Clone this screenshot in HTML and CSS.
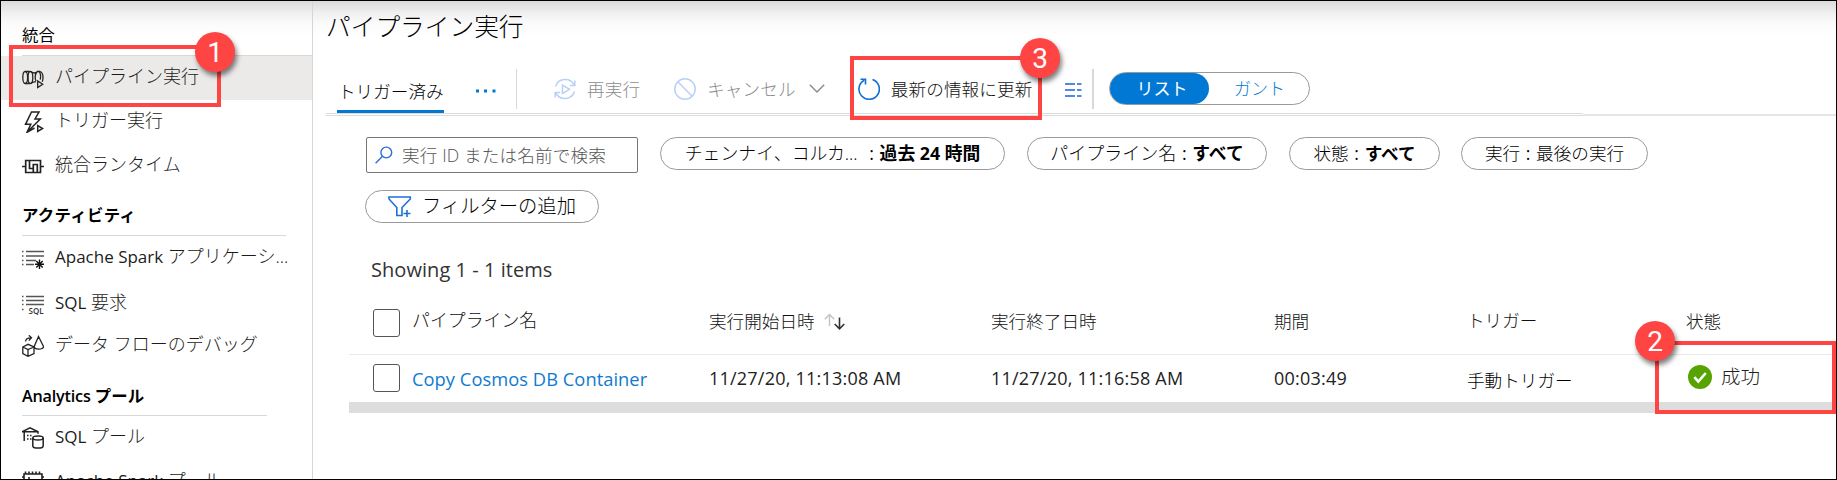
FILE: index.html
```html
<!DOCTYPE html>
<html lang="ja">
<head>
<meta charset="utf-8">
<title>パイプライン実行</title>
<link rel="stylesheet" href="styles.css">
</head>
<body>
<div class="frame">
  <nav class="sidebar">
    <h2 class="group group-first">統合</h2>
    <a class="item item-active">
      <svg class="icon" viewBox="0 0 22 22"><g fill="none" stroke="#222" stroke-width="1.3"><ellipse cx="3.200" cy="10.500" rx="2.400" ry="6"/><path d="M3.200 4.500h4.500M3.200 16.500h4.500"/><ellipse cx="8.400" cy="10.500" rx="2.400" ry="6"/><path d="M9.200 4.800c2 1.600 4 1.600 6 0M9.200 16.200c1.500-1 3-1.400 4.500-1.200M15 4.800c-2.200 2.500-2.200 7-1 9.400"/><path d="M15 4.500h3c2 .6 3 3 3 6 0 1.800-.3 3.200-.8 4.200M17.300 4.700c1.300 1.800 1.500 5.300 1 8"/><path d="M15.700 14v6.500l5-3.200z" fill="#ebeae9"/></g></svg>
      <span>パイプライン実行</span></a>
    <a class="item item-trigger">
      <svg class="icon" viewBox="0 0 22 22"><g fill="none" stroke="#222" stroke-width="1.5"><path d="M12.500 17 5 21.300l3.800-8H3.500L9.500 1H17l-4 7h5.300L5 21.300"/><path d="M15.700 14.500v6l5-3z" fill="#fff"/></g></svg>
      <span>トリガー実行</span></a>
    <a class="item item-runtime">
      <svg class="icon" viewBox="0 0 22 22"><g fill="none" stroke="#222" stroke-width="1.700"><path d="M0 11.500h3.700M18.500 11.500H22M7.500 5.500H3.700v12h7.600V9.500h4v8h3.200v-12H7.500v8h3.800M11.300 17.500h4"/></g></svg>
      <span>統合ランタイム</span></a>
    <h2 class="group group-activity">アクティビティ</h2>
    <a class="item item-spark">
      <svg class="icon" viewBox="0 0 22 22"><path d="M0 3.500h1.500M4 3.500h18M0 8h1.500M4 8h18M0 12.500h1.500M4 12.500h10M0 16.500h1.500M4 16.500h8" stroke="#555" stroke-width="1.500"/><path d="M17.500 11.500v9.500M13 16.200h9M14.300 13l6.400 6.500M20.700 13l-6.400 6.500" stroke="#111" stroke-width="1.400"/></svg>
      <span><b class="latin">Apache Spark</b> アプリケーシ...</span></a>
    <a class="item item-request">
      <svg class="icon" viewBox="0 0 22 22"><path d="M0 3.500h1.500M4 3.500h18M0 7.500h1.500M4 7.500h18M0 11.500h1.500M4 11.500h18M0 16.500h1.500" stroke="#555" stroke-width="1.600"/><text class="mini" x="6.500" y="20.500">SQL</text></svg>
      <span><b class="latin">SQL</b> 要求</span></a>
    <a class="item item-debug">
      <svg class="icon" viewBox="0 0 22 22"><g fill="none" stroke="#222" stroke-width="1.300"><path d="M.8 12 6 9.300l6 2.700v6.500L6 21.300.8 18.500zM.8 12 6 14.600l6-2.600M6 14.600v6.700M16.500 1.500l-4.300 10c0 3.500 9.300 3.500 9.300 0z"/><path d="M3.500 6.500c.3-2.600 2-3.800 5.500-3.700M6.800.3l2.700 2.500-2.700 2.800"/></g></svg>
      <span>データ フローのデバッグ</span></a>
    <h2 class="group group-pool"><b class="latin-bold">Analytics</b> プール</h2>
    <a class="item item-sqlpool">
      <svg class="icon" viewBox="0 0 22 22"><g fill="none" stroke="#222" stroke-width="1.500"><path d="M0 4.800 8 .9l8 3.900v2M0 4.800h16M2.200 5v9"/><path d="M5 8.500h1.500M8 8.500h1.500M5 12h1.500M8 12h1.500"/><ellipse cx="16" cy="11" rx="5.200" ry="2"/><path d="M10.800 11v8c0 2.800 10.400 2.800 10.400 0v-8"/></g></svg>
      <span><b class="latin">SQL</b> プール</span></a>
    <a class="item item-sparkpool">
      <svg class="icon" viewBox="0 0 22 22"><g fill="none" stroke="#222" stroke-width="1.600"><path d="M2 3h18v16H2zM3.500 3V.5M7 3V.5M10.500 3V.5M14 3V.5M17.500 3V.5M0 6h2M20 6h2M0 9h2M7 6v5"/></g></svg>
      <span><b class="latin">Apache Spark</b> プール</span></a>
  </nav>

  <main class="main">
    <h1 class="title">パイプライン実行</h1>
    <div class="toolbar">
      <div class="tab">トリガー済み</div>
      <svg class="dots" viewBox="0 0 20 4"><path d="M0 .5h3v3H0zM8 .5h3v3H8zM16.500 .5h3v3h-3z" fill="#0078d4"/></svg>
      <i class="sep sep-a"></i>
      <svg class="tool rerun" viewBox="0 0 22 22"><g fill="none" stroke="#b9d1f5" stroke-width="1.500"><path d="M1.500 8.500C4 .8 15-1.500 20 6.500M20.800 2.500V7.500h-5M20.500 13.500c-2.500 7.700-13.500 10-18.500 2M1.200 19.500V14.500h5M8.500 7v8.500l7-4.200z"/></g></svg>
      <span class="cmd cmd-off">再実行</span>
      <svg class="tool cancel" viewBox="0 0 22 22"><g fill="none" stroke="#b9d1f5" stroke-width="1.500"><circle cx="11" cy="11" r="10.200"/><path d="m3.800 3.800 14.400 14.400"/></g></svg>
      <span class="cmd cmd-off">キャンセル</span>
      <svg class="chev" viewBox="0 0 16 9"><path d="m.8.800 7.200 7.200 7.200-7.200" fill="none" stroke="#8a8a8a" stroke-width="1.400"/></svg>
      <svg class="tool refresh" viewBox="0 0 22 22"><path d="M14.500 1.500A10.200 10.200 0 1 1 6.200 2.200M2.500 1.300h5v5.200" fill="none" stroke="#0f6fd4" stroke-width="1.600"/></svg>
      <span class="cmd">最新の情報に更新</span>
      <svg class="cols" viewBox="0 0 17 14"><path d="M0 1h10M12 1h4.500M0 7h10M12 7h4.500M0 13h10M12 13h4.500" stroke="#1a63dd" stroke-width="1.700"/></svg>
      <i class="sep sep-b"></i>
      <div class="toggle"><span class="on">リスト</span><span class="off">ガント</span></div>
    </div>
    <div class="rules"><i class="rule rule-left"></i><i class="rule rule-right"></i></div>

    <div class="filters">
      <div class="search">
        <svg class="glass" viewBox="0 0 18 18"><g fill="none" stroke="#2a6fd6" stroke-width="1.400"><circle cx="11.300" cy="6.500" r="5.400"/><path d="M7.500 10.300.600 17.200"/></g></svg>
        <span>実行 ID または名前で検索</span></div>
      <div class="pill p-time"><span>チェンナイ、コルカ...</span><span class="colon">:</span><b>過去 24 時間</b></div>
      <div class="pill p-name"><span>パイプライン名</span><span class="colon">:</span><b>すべて</b></div>
      <div class="pill p-state"><span>状態</span><span class="colon">:</span><b>すべて</b></div>
      <div class="pill p-run"><span>実行</span><span class="colon">:</span><span>最後の実行</span></div>
    </div>
    <div class="pill p-add">
      <svg class="funnel" viewBox="0 0 24 22"><g fill="none" stroke="#1f6fd8" stroke-width="1.600"><path d="M1 1h21.300v2L14 11.500v8H8.800v-8L1 3zM19 14v7M15.500 17.500h7"/></g></svg>
      <span>フィルターの追加</span></div>

    <p class="count">Showing 1 - 1 items</p>
    <div class="grid">
      <div class="row head">
        <i class="check"></i><span class="up name">パイプライン名</span>
        <span class="sort">実行開始日時
          <svg class="arrows" viewBox="0 0 22 17"><path d="M5.500 13V1.500M.8 6.200l4.700-4.700 4.700 4.700" fill="none" stroke="#c2c2c2" stroke-width="1.400"/><path d="M15.500 4.500v11.300M10.700 11l4.800 4.800 4.800-4.800" fill="none" stroke="#333" stroke-width="1.600"/></svg></span>
        <span>実行終了日時</span><span>期間</span><span class="up">トリガー</span><span>状態</span>
      </div>
      <div class="row data">
        <i class="check"></i><a class="link">Copy Cosmos DB Container</a>
        <span class="time">11/27/20, 11:13:08 AM</span><span class="time">11/27/20, 11:16:58 AM</span><span class="time">00:03:49</span>
        <span class="manual">手動トリガー</span>
        <span class="status"><svg class="ok" viewBox="0 0 24 24"><circle cx="12" cy="12" r="12" fill="#57a300"/><path d="m6.300 12.200 4 4.300 7.500-8.500" fill="none" stroke="#fff" stroke-width="2.600"/></svg>成功</span>
      </div>
      <div class="scrollbar"></div>
    </div>
  </main>

  <div class="callout c1"></div><div class="badge b1">1</div>
  <div class="callout c2"></div><div class="badge b2">2</div>
  <div class="callout c3"></div><div class="badge b3">3</div>
</div>
</body>
</html>
```
FILE: styles.css
```css
* { box-sizing: border-box; }
body {
  margin: 0;
  font-family: "Open Sans", "Noto Sans CJK JP", sans-serif;
  font-size: 17.6px;
  font-weight: 300;
  color: #000;
}
h1, h2, p { margin: 0; font-weight: 300; }
svg { display: block; flex: none; }
.frame {
  position: relative;
  display: flex;
  width: 1837px;
  height: 480px;
  overflow: hidden;
  border: 1px solid #000;
  background: linear-gradient(#dcdadb 0, #f0f0f0 12px, #fbfbfb 23px, #fff 36px);
  white-space: nowrap;
}

/* sidebar */
.sidebar {
  flex: none;
  display: flex;
  flex-direction: column;
  width: 312px;
  border-right: 1px solid #d6d6d6;
}
.group {
  flex: none;
  margin-left: 21px;
  border-bottom: 1px solid #d8d8d8;
  font-size: 16.400px;
  color: #000;
}
.group-first { height: 55px; padding-top: 16px; line-height: 36px; font-weight: 400; }
.group-activity { width: 264px; height: 48px; line-height: 54px; font-weight: 700; }
.group-activity { letter-spacing: .3px; }
.group-pool { width: 245px; height: 49px; margin-top: 1px; line-height: 58px; font-weight: 700; }
.latin { font-size: 17px; font-weight: 400; }
.latin-bold { font-size: 16.200px; font-weight: 600; letter-spacing: -.2px; }
.item {
  flex: none;
  display: flex;
  align-items: center;
  height: 44px;
  padding-left: 21px;
  gap: 11px;
  font-size: 18px;
  color: #1c1c1c;
}
.item span { padding-bottom: 6px; }
.icon { width: 22px; height: 22px; }
.mini { font: 600 8px "Open Sans", sans-serif; fill: #333; }
.item-active { background: #ebeae9; }
.item-spark, .item-request { height: 45px; }
.item-spark span { padding-bottom: 8px; }
.item-debug { height: 40px; }

/* header and toolbar */
.main { flex: 1; min-width: 0; }
.title { height: 52px; padding-left: 13px; font-size: 24.700px; line-height: 52px; color: #000; }
.toolbar { display: flex; align-items: flex-start; height: 60px; padding: 16px 0 0 24px; }
.tab {
  width: 107px;
  height: 44px;
  padding-left: 1px;
  border-bottom: 3px solid #0078d4;
  line-height: 44px;
}
.dots { width: 20px; height: 4px; margin: 20px 0 0 32px; }
.sep { flex: none; height: 40px; background: #d8d8d8; }
.sep-a { width: 1px; margin-left: 20px; }
.sep-b { width: 2px; margin-left: 10px; }
.tool { width: 22px; height: 22px; margin-top: 9px; }
.rerun { margin-left: 37px; }
.cmd { margin-left: 11px; line-height: 41px; color: #111; letter-spacing: .12px; }
.cmd-off { color: #8c8c8c; }
.cancel { margin-left: 34px; }
.chev { width: 16px; height: 9px; margin: 15px 0 0 13px; }
.refresh { margin-left: 33px; }
.cols { width: 17px; height: 14px; margin: 14px 0 0 33px; }
.toggle {
  display: flex;
  width: 201px;
  height: 33px;
  margin: 3px 0 0 15px;
  border: 1px solid #999;
  border-radius: 17px;
  font-size: 17px;
  line-height: 31px;
  text-align: center;
}
.on { width: 99px; padding-left: 4px; border-radius: 16px; background: #0078d4; color: #fff; font-weight: 400; }
.off { flex: 1; color: #0078d4; }
.rules { display: flex; height: 3px; margin-left: 13px; }
.rule { height: 3px; }
.rule-left { width: 1257px; border: solid #dcdcdc; border-width: 1px 0; }
.rule-right { flex: 1; border-bottom: 2px solid #e6e6e6; }

/* filters */
.filters { display: flex; padding: 21px 0 0 53px; }
.search {
  display: flex;
  align-items: center;
  width: 272px;
  height: 36px;
  margin-right: 22px;
  padding-left: 8px;
  gap: 9px;
  border: 1px solid #767676;
  border-radius: 2px;
  color: #555;
  letter-spacing: .15px;
}
.search span { padding-bottom: 2px; }
.glass { width: 18px; height: 18px; }
.pill {
  display: flex;
  justify-content: center;
  height: 33px;
  border: 1px solid #999;
  border-radius: 17px;
  line-height: 31px;
  color: #000;
}
.pill b { font-weight: 700; font-size: 17.600px; }
.colon { width: 16px; text-align: center; font-weight: 400; }
.p-time { width: 345px; margin-right: 22px; font-size: 17.900px; }
.p-time b { font-size: 17.800px; }
.p-time .colon { margin-left: 6px; }
.p-name { width: 240px; margin-right: 22px; font-size: 18px; }
.p-name b { font-size: 17.800px; }
.p-state { width: 151px; margin-right: 21px; }
.p-run { width: 187px; }
.p-add { width: 234px; margin: 17px 0 0 52px; gap: 10px; font-size: 19.300px; line-height: 30px; }
.funnel { width: 24px; height: 22px; margin-top: 5px; }

/* runs table */
.count { height: 40px; padding-left: 58px; margin-top: 27px; font-size: 20px; font-weight: 400; line-height: 40px; letter-spacing: .05px; color: #333; }
.grid { margin-left: 36px; width: 1484px; }
.row { display: grid; grid-template-columns: 39px 297px 282px 283px 193px 219px 1fr; padding-left: 24px; }
.head { height: 65px; border-bottom: 1px solid #e9e9e9; line-height: 62px; color: #111; }
.check { width: 27px; height: 28px; border: 1px solid #555; border-radius: 3px; }
.head .check { margin-top: 19px; }
.data .check { margin-top: 9px; }
.head .up { margin-top: -1px; }
.head .name { font-size: 17.900px; }
.sort { display: flex; gap: 9px; }
.arrows { width: 22px; height: 17px; margin-top: 23px; }
.data { height: 47px; line-height: 47px; color: #222; font-size: 18px; font-weight: 400; }
.link { color: #0f7ad0; font-size: 18.300px; letter-spacing: .05px; }
.time { letter-spacing: .22px; }
.manual { line-height: 50px; font-size: 17.600px; font-weight: 300; color: #000; }
.status { display: flex; align-items: center; height: 43px; padding-left: 2px; gap: 9px; font-size: 19.500px; font-weight: 300; }
.ok { width: 24px; height: 24px; }
.scrollbar { height: 11px; background: #ddd; }

/* numbered callouts, laid over the page */
.callout { position: absolute; border: 4px solid #ff4444; }
.c1 { left: 8px; top: 44px; width: 212px; height: 62px; }
.c2 { left: 1654px; top: 340px; width: 181px; height: 73px; }
.c3 { left: 849px; top: 55px; width: 192px; height: 64px; }
.badge {
  position: absolute;
  width: 40px;
  height: 40px;
  border-radius: 50%;
  background: #ff4444;
  box-shadow: 2px 4px 5px rgba(0, 0, 0, .5);
  color: #fff;
  font: 400 28px/41px Roboto, sans-serif;
  text-align: center;
}
.b1 { left: 194px; top: 31px; }
.b2 { left: 1634px; top: 320px; }
.b3 { left: 1019px; top: 37px; }
```
